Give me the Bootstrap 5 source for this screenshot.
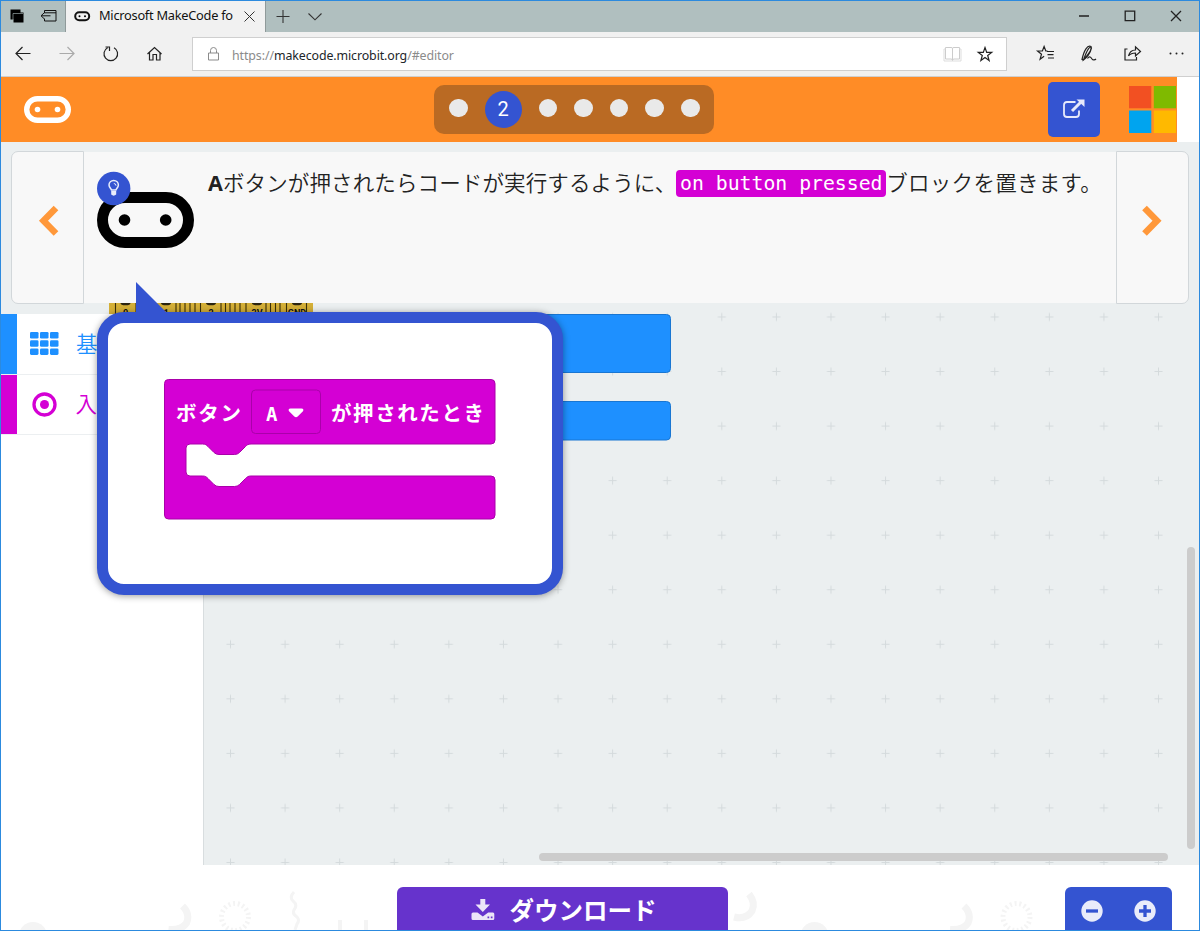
<!DOCTYPE html>
<html lang="ja">
<head>
<meta charset="utf-8">
<meta name="viewport" content="width=device-width, initial-scale=1">
<title>Microsoft MakeCode for micro:bit</title>
<link href="https://cdn.jsdelivr.net/npm/bootstrap@5.3.0/dist/css/bootstrap.min.css" rel="stylesheet">
<style>
  body { font-family: "Noto Sans", "Noto Sans CJK JP", sans-serif; color: #222; }
  svg { display: block; flex: none; }
  .app-window { width: 1200px; height: 931px; border: 1px solid #2c8ade; }
  .tab-strip { height: 31px; background: #b0bfbf; }
  .tab-tools { width: 65px; border-right: 1px solid #8f9a9a; }
  .page-tab { width: 200px; background: #f1f1f1; font-size: 12.8px; border-right: 1px solid #8f9a9a; color: #111; }
  .tab-label { width: 135px; letter-spacing: -.26px; margin-top: -1px; }
  .address-row { height: 45px; background: #f1f1f1; border-bottom: 1px solid #cfcfcf; }
  .address-box { width: 815px; height: 34px; border: 1px solid #cfcfcf; font-size: 12.4px; letter-spacing: -.1px; color: #8b8b8b; }
  .header-wrap { height: 65px; background: #fff; }
  .header-bar { width: 1176px; background: #ff8c26; padding: 5px 0 0 23px; }
  .brand-logo { margin-top: 13.500px; }
  .steps { width: 280px; height: 49px; margin: 3px 0 0 363px; padding: 0 0 1px 15px; background: #ba6a23; border-radius: 10px; }
  .step-dot { width: 18.6px; height: 18.6px; border-radius: 50%; background: #e9e9e9; margin-right: 17px; margin-top: -2px; }
  .step-now { width: 37px; height: 37px; border-radius: 50%; background: #3454d1; color: #fff; font: 20px/36px Roboto, sans-serif; text-align: center; margin-right: 17px; }
  .open-btn, .open-btn:hover { width: 52px; height: 55px; margin-left: 334px; border-radius: 5px; background: #3454d1; border: 0; }
  .ms-squares { margin: 4px 0 0 28.5px; }
  .tutorial { height: 162px; background: #ebeff0; padding: 9px 10px 0; }
  .tutorial-nav { height: 153px; background: #f8f8f8; border: 1px solid #d2d7da; padding: 0 0 14px; }
  .nav-prev { width: 73px; border-radius: 7px 0 0 7px; }
  .nav-next { width: 73px; border-radius: 0 7px 7px 0; }
  .tutorial-body { height: 151px; margin-top: 1px; background: #f8f8f8; padding: 16px 0 0 13px; }
  .hint-text { font-size: 21.5px; line-height: 32px; padding-left: 13px; font-family: "Open Sans", "Noto Sans CJK JP", sans-serif; font-weight: 350; letter-spacing: .12px; white-space: nowrap; margin-top: -1px; }
  .hint-tail { letter-spacing: .3px; }
  .hint-key { font-weight: 700; }
  .block-chip { font: 19.8px/27px "DejaVu Sans Mono", monospace; letter-spacing: 0; color: #fff; background: #d400d4; border-radius: 4px; display: inline-block; padding: 0 3.7px; height: 27px; position: relative; top: -1px; }
  .hint-bubble { left: 96px; top: 311px; width: 466px; height: 283px; border: 11px solid #3454d1; border-radius: 27px; background: #fff; box-shadow: 0 1px 7px rgba(0,0,0,.4); z-index: 5; padding: 56px 0 0 56px; }
  .bubble-tail { left: 135px; top: 281px; z-index: 6; }
  .editor { height: 561px; background: #ebeff0; }
  .toolbox { width: 203px; height: 551px; background: #fff; border-right: 1px solid #d8dddf; }
  .tool-row { height: 60.5px; padding-left: 16px; border-bottom: 1px solid #eceff1; box-shadow: inset 16px 0 currentColor; font: 350 21.5px "Noto Sans CJK JP", sans-serif; }
  .tool-name { margin: -3px 0 0 17px; }
  .tool-basic { color: #1e90ff; }
  .tool-input { color: #d400d4; }
  .pin-strip { left: 108px; top: -1px; }
  .app-footer { height: 65px; background: #fff; padding: 22px 27px 0 0; }
  .footer-art { left: 0; top: 0; }
  .download-btn { width: 331px; height: 43px; margin-left: 396px; background: #6633cc; color: #fff; border-radius: 6px 6px 0 0; font: bold 24.5px "Noto Sans CJK JP", sans-serif; }
  .zoom-group { width: 107px; height: 43px; background: #3454d1; border-radius: 6px 6px 0 0; padding: 5px 0 0 0; }
</style>
</head>
<body class="overflow-hidden">
<div class="app-window position-relative d-flex flex-column overflow-hidden">

  <div class="tab-strip d-flex flex-shrink-0">
    <div class="tab-tools">
      <svg width="64" height="31" fill="none" stroke="#111">
        <path d="M9.500 8.500h10v3h3v10h-10v-3h-3z" fill="#000" stroke="none"/><path d="M12 19v-6.500h10" stroke="#b0bfbf" stroke-width=".6"/>
        <path d="M43.500 12V9.500h11.500v10.500H43.500v-2.500M43 11.800h12M49.500 14.800H40.500M43 12l-3 2.800 3 2.800"/>
      </svg>
    </div>
    <div class="page-tab d-flex align-items-center">
      <svg class="ms-2 me-2" width="17" height="11"><rect x="1.200" y="1.200" width="14" height="8" rx="4" fill="none" stroke="#111" stroke-width="2"/><circle cx="5.500" cy="5.200" r="1"/><circle cx="11" cy="5.200" r="1"/></svg>
      <span class="tab-label text-nowrap">Microsoft MakeCode fo</span>
      <svg class="ms-2" width="16" height="16" stroke="#333"><path d="M2.500 2.500l10 10M12.500 2.500l-10 10"/></svg>
    </div>
    <svg width="70" height="31" fill="none" stroke="#333" stroke-width="1.100"><path d="M10.500 15.500h13M17 9v13M42.500 12.500l6.500 6.300 6.500-6.300"/></svg>
    <svg class="ms-auto" width="129" height="31" fill="none" stroke="#222" stroke-width="1.300"><path d="M9 15h10M55.200 10.200h9.500v9.500h-9.500zM101 10l10 10M111 10l-10 10"/></svg>
  </div>

  <div class="address-row d-flex align-items-center flex-shrink-0">
    <svg width="191" height="44" fill="none" stroke="#222" stroke-width="1.200">
      <path d="M29.500 21.500H15M21.500 15l-6.500 6.500 6.500 6.500"/>
      <path d="M58.500 21.500H73M66.500 15l6.500 6.500-6.500 6.500" stroke="#aaa"/>
      <path d="M113 15.800a6.800 6.800 0 1 1-6.400 0M104.500 15h4v4"/>
      <path d="M146.500 22l7-6.500 7 6.500M148.500 20.500v7.500h3.500v-5.500h3.500v5.500h3.500v-7.500"/>
    </svg>
    <div class="address-box d-flex align-items-center bg-white">
      <svg style="margin-left:15px" width="12" height="14" fill="none" stroke="#8b8b8b"><path d="M.5 6h10v7H.5zM2.500 6V3.500a3 3 0 0 1 6 0V6"/></svg>
      <span class="ms-2 ps-1 pt-1 text-nowrap">https://<span class="text-dark">makecode.microbit.org</span>/#editor</span>
      <svg class="ms-auto" width="65" height="32" fill="none"><path d="M4.500 9.500h5.500q1.500 0 1.500 1v12q0-1.500-1.500-1.500H4.500zM18.500 9.500h-5.500q-1.500 0-1.500 1v12q0-1.500 1.500-1.500h5.500z" stroke="#ccc" stroke-width="1"/><path d="M4.500 11H3v12h17V11h-1.500" stroke="#ddd"/><path d="M44 9.500l1.700 4.900h5l-4 3.100 1.400 5-4.100-3-4.100 3 1.400-5-4-3.100h5z" stroke="#222" stroke-width="1.200"/></svg>
    </div>
    <svg width="190" height="44" fill="none" stroke="#222" stroke-width="1.200">
      <path d="M40.500 19h-1.700l-1.700-4.500-1.700 4.500h-4.800l3.900 3.200-1.400 5 4-2.900M40 19.500h7M40.500 22.700h6M41 26h6"/>
      <path d="M76.500 28c3-2 7-7 8-12-1.500-3-4.500 2-8 12zM75 27.500c2-9 5.500-15 9-13 1 3-3 9-8 13.500zm5.500-1c2-3 3.500-1 4.500.5s3 1 4 0"/>
      <path d="M120.500 17h-2.500v11h11.500v-3M121.500 24c1-4 3.500-6 7-6v-3.200l5 4.700-5 4.500v-3c-3 0-5 .5-7 3z"/>
      <g fill="#222" stroke="none"><circle cx="163.500" cy="21.500" r="1"/><circle cx="169.500" cy="21.500" r="1"/><circle cx="175.500" cy="21.500" r="1"/></g>
    </svg>
  </div>

  <header class="header-wrap flex-shrink-0 d-flex">
    <div class="header-bar d-flex align-items-start">
      <svg class="brand-logo" width="47" height="27"><rect x="2.700" y="2.700" width="41.600" height="21.600" rx="10.800" fill="none" stroke="#fff" stroke-width="5.400"/><circle cx="13.500" cy="13.500" r="2.800" fill="#fff"/><circle cx="33.500" cy="13.500" r="2.800" fill="#fff"/></svg>
      <div class="steps d-flex align-items-center">
        <span class="step-dot"></span><span class="step-now">2</span><span class="step-dot"></span><span class="step-dot"></span><span class="step-dot"></span><span class="step-dot"></span><span class="step-dot me-0"></span>
      </div>
      <button class="open-btn btn p-0" aria-label="Open">
        <svg class="mx-auto" width="24" height="24" fill="none" stroke="#e6e9fb"><path d="M13.500 4H5q-3 0-3 3v9q0 3 3 3h9q3 0 3-3V12.500" stroke-width="1.800"/><path d="M10 13L18.500 4.500" stroke-width="3"/><path d="M14.500 1.500H22.500v7.500z" fill="#e6e9fb" stroke="none"/></svg>
      </button>
      <svg class="ms-squares" width="47" height="48"><path fill="#f25022" d="M0 0h22.300v22.300H0z"/><path fill="#7fba00" d="M24.800 0H47v22.300H24.800z"/><path fill="#00a4ef" d="M0 24.500h22.300V47H0z"/><path fill="#ffb900" d="M24.800 24.500H47V47H24.800z"/></svg>
    </div>
  </header>

  <section class="tutorial d-flex flex-shrink-0">
    <button class="tutorial-nav nav-prev" aria-label="Previous"><svg class="ms-4" width="26" height="34" fill="none" stroke="#ff983a" stroke-width="6.500"><path d="M20 4L7.500 16.800 20 29.500"/></svg></button>
    <div class="tutorial-body d-flex flex-grow-1">
      <svg width="98" height="84">
        <rect x="5.500" y="29.500" width="86" height="45" rx="22.500" fill="none" stroke="#000" stroke-width="11"/><circle cx="27.500" cy="52" r="5.800"/><circle cx="68.700" cy="52" r="5.800"/>
        <circle cx="16.700" cy="20.500" r="16.700" fill="#3454d1"/>
        <path d="M14.500 22c-.3-1.200-2.500-2.500-2.500-4.900a4.700 4.700 0 0 1 9.400 0c0 2.400-2.200 3.700-2.500 4.900z" fill="none" stroke="#e9edfb" stroke-width="1.500"/><path d="M14.200 23h5v3.500q-2.500 2.300-5 0z" fill="#e9edfb"/><path d="M16.800 15.500q2.200 0 2.200 2.200" fill="none" stroke="#e9edfb"/>
      </svg>
      <div class="hint-text"><span class="hint-key">A</span>ボタンが押されたらコードが実行するように、<span class="block-chip">on button pressed</span><span class="hint-tail">ブロックを置きます。</span></div>
    </div>
    <button class="tutorial-nav nav-next" aria-label="Next"><svg class="ms-4" width="26" height="34" fill="none" stroke="#ff983a" stroke-width="6.500"><path d="M3.500 4L16 16.800 3.500 29.500"/></svg></button>
  </section>

  <svg class="bubble-tail position-absolute" width="34" height="33"><path d="M0 0l32 32H0z" fill="#3454d1"/></svg>
  <div class="hint-bubble position-absolute">
    <svg width="334" height="142">
      <path d="M4.500.5H327a4 4 0 0 1 4 4V61a4 4 0 0 1-4 4H87c-3 0-4 1-5.500 2.500l-6 6q-2 2-5 2H55q-3 0-5-2l-6-6C42.500 66 41.500 65 38.500 65H26a4 4 0 0 0-4 4v24a4 4 0 0 0 4 4h12.500c3 0 4 1 5.500 2.500l6 6q2 2 5 2h15.500q3 0 5-2l6-6C83 98 84 97 87 97H327a4 4 0 0 1 4 4v35a4 4 0 0 1-4 4H4.500a4 4 0 0 1-4-4V4.500a4 4 0 0 1 4-4z" fill="#d400d4" stroke="#aa00aa"/>
      <rect x="87.500" y="11" width="69" height="43.500" rx="4" fill="none" stroke="#aa00aa"/>
      <path d="M126.500 29.500h11c2 0 2.500 1.500 1.200 3l-5 5q-1.700 1.500-3.400 0l-5-5c-1.300-1.500-.8-3 1.200-3z" fill="#fff"/>
      <g fill="#fff" font-family="'Noto Sans CJK JP', sans-serif" font-weight="700" font-size="20.500">
        <text x="12" y="41.500" textLength="65">ボタン</text>
        <text x="102" y="41.500" font-family="'DejaVu Sans Mono', monospace" font-size="19">A</text>
        <text x="167" y="41.500" textLength="153">が押されたとき</text>
      </g>
    </svg>
  </div>

  <main class="editor position-relative d-flex align-items-end flex-shrink-0">
    <aside class="toolbox">
      <div class="tool-row tool-basic d-flex align-items-center">
        <svg style="margin-left:13px" width="29" height="24" fill="currentColor"><g id="r"><rect y="0" width="8.500" height="6.500" rx="1.300"/><rect x="10" y="0" width="8.500" height="6.500" rx="1.300"/><rect x="20" y="0" width="8.500" height="6.500" rx="1.300"/></g><use href="#r" y="8.200"/><use href="#r" y="16.400"/></svg>
        <span class="tool-name">基本</span>
      </div>
      <div class="tool-row tool-input d-flex align-items-center">
        <svg style="margin-left:14.500px" width="27" height="26"><circle cx="12.500" cy="13.500" r="10.500" fill="none" stroke="currentColor" stroke-width="3.300"/><circle cx="12.500" cy="13.500" r="4.500" fill="currentColor"/></svg>
        <span class="tool-name">入力</span>
      </div>
    </aside>
    <svg width="995" height="561">
      <defs><pattern id="crosses" x="-.8" y="-14.300" width="54.590" height="54.550" patternUnits="userSpaceOnUse"><path d="M23.300 27.300h8M27.300 23.300v8" stroke="#d4dadc" stroke-width="1"/></pattern></defs>
      <rect width="995" height="561" fill="url(#crosses)"/>
      <rect x="100" y="10.500" width="366.500" height="58" rx="4" fill="#1e90ff" stroke="#1976d2"/>
      <rect x="100" y="97.500" width="366.500" height="38.500" rx="4" fill="#1e90ff" stroke="#1976d2"/>
      <rect x="335" y="549" width="629" height="8" rx="4" fill="#ccc"/>
      <rect x="983" y="243" width="8" height="302" rx="4" fill="#ccc"/>
    </svg>
    <svg class="pin-strip position-absolute" width="204" height="11">
      <rect width="204" height="11" fill="#d4af37"/>
      <path d="M6.500 0v11M27 0v11M47 0v11M67 0v11M71 0v11M76 0v11M81 0v11M86 0v11M91.500 0v11M112 0v11M116.500 0v11M121 0v11M126 0v11M131 0v11M137 0v11M157 0v11M161.500 0v11M166.500 0v11M171 0v11M177.500 0v11M197.500 0v11" stroke="#3a2f0a" stroke-width="1.100"/>
      <g fill="#2b2410"><ellipse cx="16.500" cy="0" rx="5" ry="2.300"/><ellipse cx="57" cy="0" rx="5" ry="2.300"/><ellipse cx="102" cy="0" rx="5" ry="2.300"/><ellipse cx="148" cy="0" rx="5" ry="2.300"/><ellipse cx="188" cy="0" rx="5" ry="2.300"/></g>
      <g font-family="Roboto, sans-serif" font-weight="700" font-size="9" text-anchor="middle" fill="#111"><text x="16.500" y="12.500">0</text><text x="57" y="12.500">1</text><text x="102" y="12.500">2</text><text x="148" y="12.500">3V</text><text x="188" y="12.500">GND</text></g>
    </svg>
  </main>

  <footer class="app-footer position-relative d-flex justify-content-between">
    <svg class="footer-art position-absolute" width="1198" height="65" fill="none" stroke="#f4f4f4">
      <g id="art">
        <circle cx="32" cy="71" r="14" fill="#f4f4f4" stroke="none"/>
        <path d="M181.500 41q8 8 4 17-5 7.500-18 6.500" stroke-width="7"/>
        <circle cx="234" cy="52" r="13.500" stroke-width="5" stroke-dasharray="2 2.713"/>
      </g>
      <use href="#art" x="781.500"/>
      <path d="M293 27q-5 5-1 9 5 4 1 9-2 4 3 7 3 3 0 7l-2 6" stroke-width="3"/>
      <path d="M339 55v10M365 55v10" stroke-width="4"/>
      <path d="M748 29q7 9 3 17-6 9-18 6" stroke-width="7"/>
    </svg>
    <button class="download-btn btn position-relative d-flex align-items-center justify-content-center p-0">
      <svg style="margin:2px 15px 0 2px" width="24" height="24" fill="#ece5f8"><path d="M9.300 1h5v5.500h4.700l-7.200 7.500-7.300-7.500h4.800z"/><path d="M2 14.500h4.500l5.300 4 5.400-4H22q1.300 0 1.300 1.500v4.500q0 1.500-1.500 1.500H2Q.5 22 .5 20.500V16q0-1.500 1.500-1.500z"/><path d="M16.500 18.500h1.700v1.700h-1.700zM19.800 18.500h1.700v1.700h-1.700z" fill="#6633cc"/></svg>
      <span style="padding-top:2px">ダウンロード</span>
    </button>
    <div class="zoom-group position-relative d-flex align-items-center justify-content-around">
      <svg width="22" height="22"><circle cx="11" cy="11" r="10.700" fill="#e9ecfa"/><path d="M5 11h12" stroke="#3454d1" stroke-width="3.300"/></svg>
      <svg width="22" height="22"><circle cx="11" cy="11" r="10.700" fill="#e9ecfa"/><path d="M5 11h12M11 5v12" stroke="#3454d1" stroke-width="3.300"/></svg>
    </div>
  </footer>
</div>
<script src="https://cdn.jsdelivr.net/npm/bootstrap@5.3.0/dist/js/bootstrap.bundle.min.js"></script>
</body>
</html>
